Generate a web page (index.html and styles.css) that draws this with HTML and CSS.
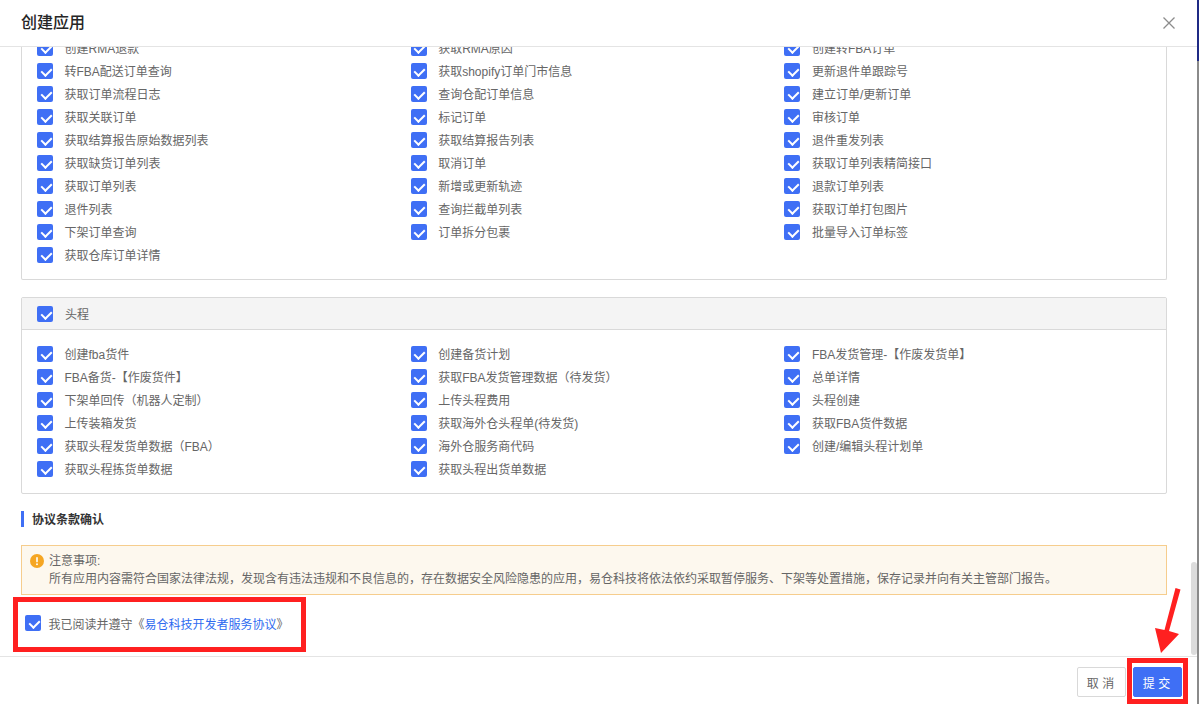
FILE: index.html
```html
<!DOCTYPE html>
<html lang="zh-CN">
<head>
    <meta charset="UTF-8">
    <title>创建应用</title>
    <link rel="stylesheet" href="styles.css">
</head>
<body>
    <div class="page">
        <div class="modal">
            <div class="modal-header">
                <span class="modal-title">创建应用</span>
                <svg class="close-icon" width="14" height="14" viewBox="0 0 14 14"><path d="M1.5 1.5 L12.5 12.5 M12.5 1.5 L1.5 12.5" stroke="#8c8c8c" stroke-width="1.3" fill="none"/></svg>
            </div>

            <div class="modal-body">
                <div class="modal-inner">
                    <!-- Order permissions, header scrolled out of view -->
                    <div class="panel">
                        <div class="perm-grid perm-grid-clipped">
                            <label class="perm"><span class="check"></span>创建RMA退款</label>
                            <label class="perm"><span class="check"></span>获取RMA原因</label>
                            <label class="perm"><span class="check"></span>创建转FBA订单</label>
                            <label class="perm"><span class="check"></span>转FBA配送订单查询</label>
                            <label class="perm"><span class="check"></span>获取shopify订单门市信息</label>
                            <label class="perm"><span class="check"></span>更新退件单跟踪号</label>
                            <label class="perm"><span class="check"></span>获取订单流程日志</label>
                            <label class="perm"><span class="check"></span>查询仓配订单信息</label>
                            <label class="perm"><span class="check"></span>建立订单/更新订单</label>
                            <label class="perm"><span class="check"></span>获取关联订单</label>
                            <label class="perm"><span class="check"></span>标记订单</label>
                            <label class="perm"><span class="check"></span>审核订单</label>
                            <label class="perm"><span class="check"></span>获取结算报告原始数据列表</label>
                            <label class="perm"><span class="check"></span>获取结算报告列表</label>
                            <label class="perm"><span class="check"></span>退件重发列表</label>
                            <label class="perm"><span class="check"></span>获取缺货订单列表</label>
                            <label class="perm"><span class="check"></span>取消订单</label>
                            <label class="perm"><span class="check"></span>获取订单列表精简接口</label>
                            <label class="perm"><span class="check"></span>获取订单列表</label>
                            <label class="perm"><span class="check"></span>新增或更新轨迹</label>
                            <label class="perm"><span class="check"></span>退款订单列表</label>
                            <label class="perm"><span class="check"></span>退件列表</label>
                            <label class="perm"><span class="check"></span>查询拦截单列表</label>
                            <label class="perm"><span class="check"></span>获取订单打包图片</label>
                            <label class="perm"><span class="check"></span>下架订单查询</label>
                            <label class="perm"><span class="check"></span>订单拆分包裹</label>
                            <label class="perm"><span class="check"></span>批量导入订单标签</label>
                            <label class="perm"><span class="check"></span>获取仓库订单详情</label>
                        </div>
                    </div>

                    <!-- First leg permissions -->
                    <div class="panel panel-full">
                        <div class="panel-head"><span class="check"></span>头程</div>
                        <div class="perm-grid">
                            <label class="perm"><span class="check"></span>创建fba货件</label>
                            <label class="perm"><span class="check"></span>创建备货计划</label>
                            <label class="perm"><span class="check"></span>FBA发货管理-【作废发货单】</label>
                            <label class="perm"><span class="check"></span>FBA备货-【作废货件】</label>
                            <label class="perm"><span class="check"></span>获取FBA发货管理数据（待发货）</label>
                            <label class="perm"><span class="check"></span>总单详情</label>
                            <label class="perm"><span class="check"></span>下架单回传（机器人定制）</label>
                            <label class="perm"><span class="check"></span>上传头程费用</label>
                            <label class="perm"><span class="check"></span>头程创建</label>
                            <label class="perm"><span class="check"></span>上传装箱发货</label>
                            <label class="perm"><span class="check"></span>获取海外仓头程单(待发货)</label>
                            <label class="perm"><span class="check"></span>获取FBA货件数据</label>
                            <label class="perm"><span class="check"></span>获取头程发货单数据（FBA）</label>
                            <label class="perm"><span class="check"></span>海外仓服务商代码</label>
                            <label class="perm"><span class="check"></span>创建/编辑头程计划单</label>
                            <label class="perm"><span class="check"></span>获取头程拣货单数据</label>
                            <label class="perm"><span class="check"></span>获取头程出货单数据</label>
                        </div>
                    </div>

                    <div class="section-title">协议条款确认</div>

                    <div class="notice">
                        <svg class="notice-icon" width="14" height="14" viewBox="0 0 14 14"><circle cx="7" cy="7" r="7" fill="#f5a623"/><rect x="6.2" y="3" width="1.6" height="5.4" rx="0.8" fill="#fff"/><circle cx="7" cy="10.2" r="0.95" fill="#fff"/></svg>
                        <div class="notice-text">
                            <div>注意事项:</div>
                            <div>所有应用内容需符合国家法律法规，发现含有违法违规和不良信息的，存在数据安全风险隐患的应用，易仓科技将依法依约采取暂停服务、下架等处置措施，保存记录并向有关主管部门报告。</div>
                        </div>
                    </div>

                    <label class="agree"><span class="check"></span><span>我已阅读并遵守《<a class="agree-link" href="#">易仓科技开发者服务协议</a>》</span></label>
                </div>
                <div class="scroll-thumb"></div>
            </div>

            <div class="modal-footer">
                <button class="btn">取 消</button>
                <button class="btn btn-primary">提 交</button>
            </div>
        </div>

        <div class="edge"><div class="edge-top"></div></div>

        <!-- Red annotations drawn over the screenshot -->
        <div class="mark mark-agree"></div>
        <div class="mark mark-submit"></div>
        <svg class="mark-arrow" width="30" height="70" viewBox="0 0 30 70"><path d="M21.5 2 L26.5 3.5 L15 45 L25 48 L7 67 L1 42 L10.5 44 Z" fill="#ff2020"/></svg>
    </div>
</body>
</html>
```

FILE: styles.css
```css
/* Reset */
* {
    margin: 0;
    padding: 0;
    box-sizing: border-box;
}

body {
    font-family: "Liberation Sans", "Noto Sans CJK SC", sans-serif;
    font-size: 12px;
    color: #666;
    background: #fff;
    overflow: hidden;
}

.page {
    position: relative;
    display: flex;
    width: 1199px;
    height: 704px;
    overflow: hidden;
}

/* Modal */
.modal {
    flex: 1;
    display: flex;
    flex-direction: column;
    background: #fff;
}

.modal-header {
    height: 47px;
    flex: none;
    display: flex;
    align-items: center;
    justify-content: space-between;
    padding: 0 21px 4px 21px;
    border-bottom: 1px solid #e4e4e4;
}

.modal-title {
    font-size: 16px;
    font-weight: 500;
    color: #262626;
}

.close-icon {
    margin-top: 4px;
}

.modal-body {
    position: relative;
    flex: 1;
    overflow: hidden;
}

.modal-inner {
    margin-top: -11px;
    padding: 0 30px 0 21px;
}

.modal-footer {
    height: 48px;
    flex: none;
    display: flex;
    justify-content: flex-end;
    align-items: flex-start;
    gap: 7px;
    padding: 10px 15px 0 0;
    border-top: 1px solid #e4e4e4;
}

/* Scrollbar */
.scroll-thumb {
    position: absolute;
    top: 515px;
    right: 0;
    width: 6px;
    height: 93px;
    border-radius: 3px;
    background: #dcdcdc;
}

/* Right window edge */
.edge {
    width: 2px;
    flex: none;
    background: #8a8a8a;
}

.edge-top {
    height: 61px;
    background: #1f2a85;
}

/* Permission panels */
.panel {
    border: 1px solid #d9d9d9;
    border-top: none;
    border-radius: 2px;
}

.panel-full {
    margin-top: 17px;
    border-top: 1px solid #d9d9d9;
}

.panel-head {
    height: 32px;
    display: flex;
    align-items: center;
    padding-left: 15px;
    background: #f4f4f4;
    border-bottom: 1px solid #d9d9d9;
}

.panel-head .check {
    margin-right: 12px;
}

.perm-grid {
    display: grid;
    grid-template-columns: repeat(3, 373.7px);
    grid-auto-rows: 23px;
    padding: 12px 0 13px 15px;
}

.perm-grid-clipped {
    padding-top: 0;
}

.perm {
    display: flex;
    align-items: center;
    gap: 11.5px;
    white-space: nowrap;
}

/* Checkbox */
.check {
    position: relative;
    flex: none;
    display: inline-block;
    width: 16px;
    height: 16px;
    border-radius: 2px;
    background: #3f6ff5;
}

.check::after {
    content: "";
    position: absolute;
    top: 3px;
    left: 5.5px;
    width: 5px;
    height: 8px;
    border: solid #fff;
    border-width: 0 2px 2px 0;
    transform: rotate(45deg);
}

/* Agreement section */
.section-title {
    margin-top: 17px;
    height: 16px;
    line-height: 18px;
    padding-left: 8px;
    border-left: 3px solid #3f6ff5;
    font-weight: 700;
    color: #333;
}

.notice {
    display: flex;
    gap: 5px;
    height: 50px;
    margin-top: 18px;
    padding: 7px 8px 0;
    background: #fdf8ee;
    border: 1px solid #f6cd8d;
    line-height: 17.5px;
}

.notice-icon {
    flex: none;
    margin-top: 1px;
}

.agree {
    display: flex;
    align-items: center;
    gap: 7.5px;
    margin: 20px 0 0 4px;
    height: 16px;
}

.agree-link {
    color: #2f6bf0;
    text-decoration: none;
}

/* Footer buttons */
.btn {
    width: 49px;
    height: 30px;
    padding-right: 2px;
    font: inherit;
    color: #666;
    background: #fff;
    border: 1px solid #d9d9d9;
    border-radius: 2px;
}

.btn-primary {
    color: #fff;
    background: #3f6ff5;
    border-color: #3f6ff5;
}

/* Red annotations */
.mark {
    position: absolute;
    border: 5px solid #ff2020;
}

.mark-agree {
    left: 13px;
    top: 597px;
    width: 293px;
    height: 55px;
}

.mark-submit {
    left: 1127px;
    top: 658px;
    width: 61px;
    height: 46px;
}

.mark-arrow {
    position: absolute;
    left: 1154px;
    top: 586px;
}
```
